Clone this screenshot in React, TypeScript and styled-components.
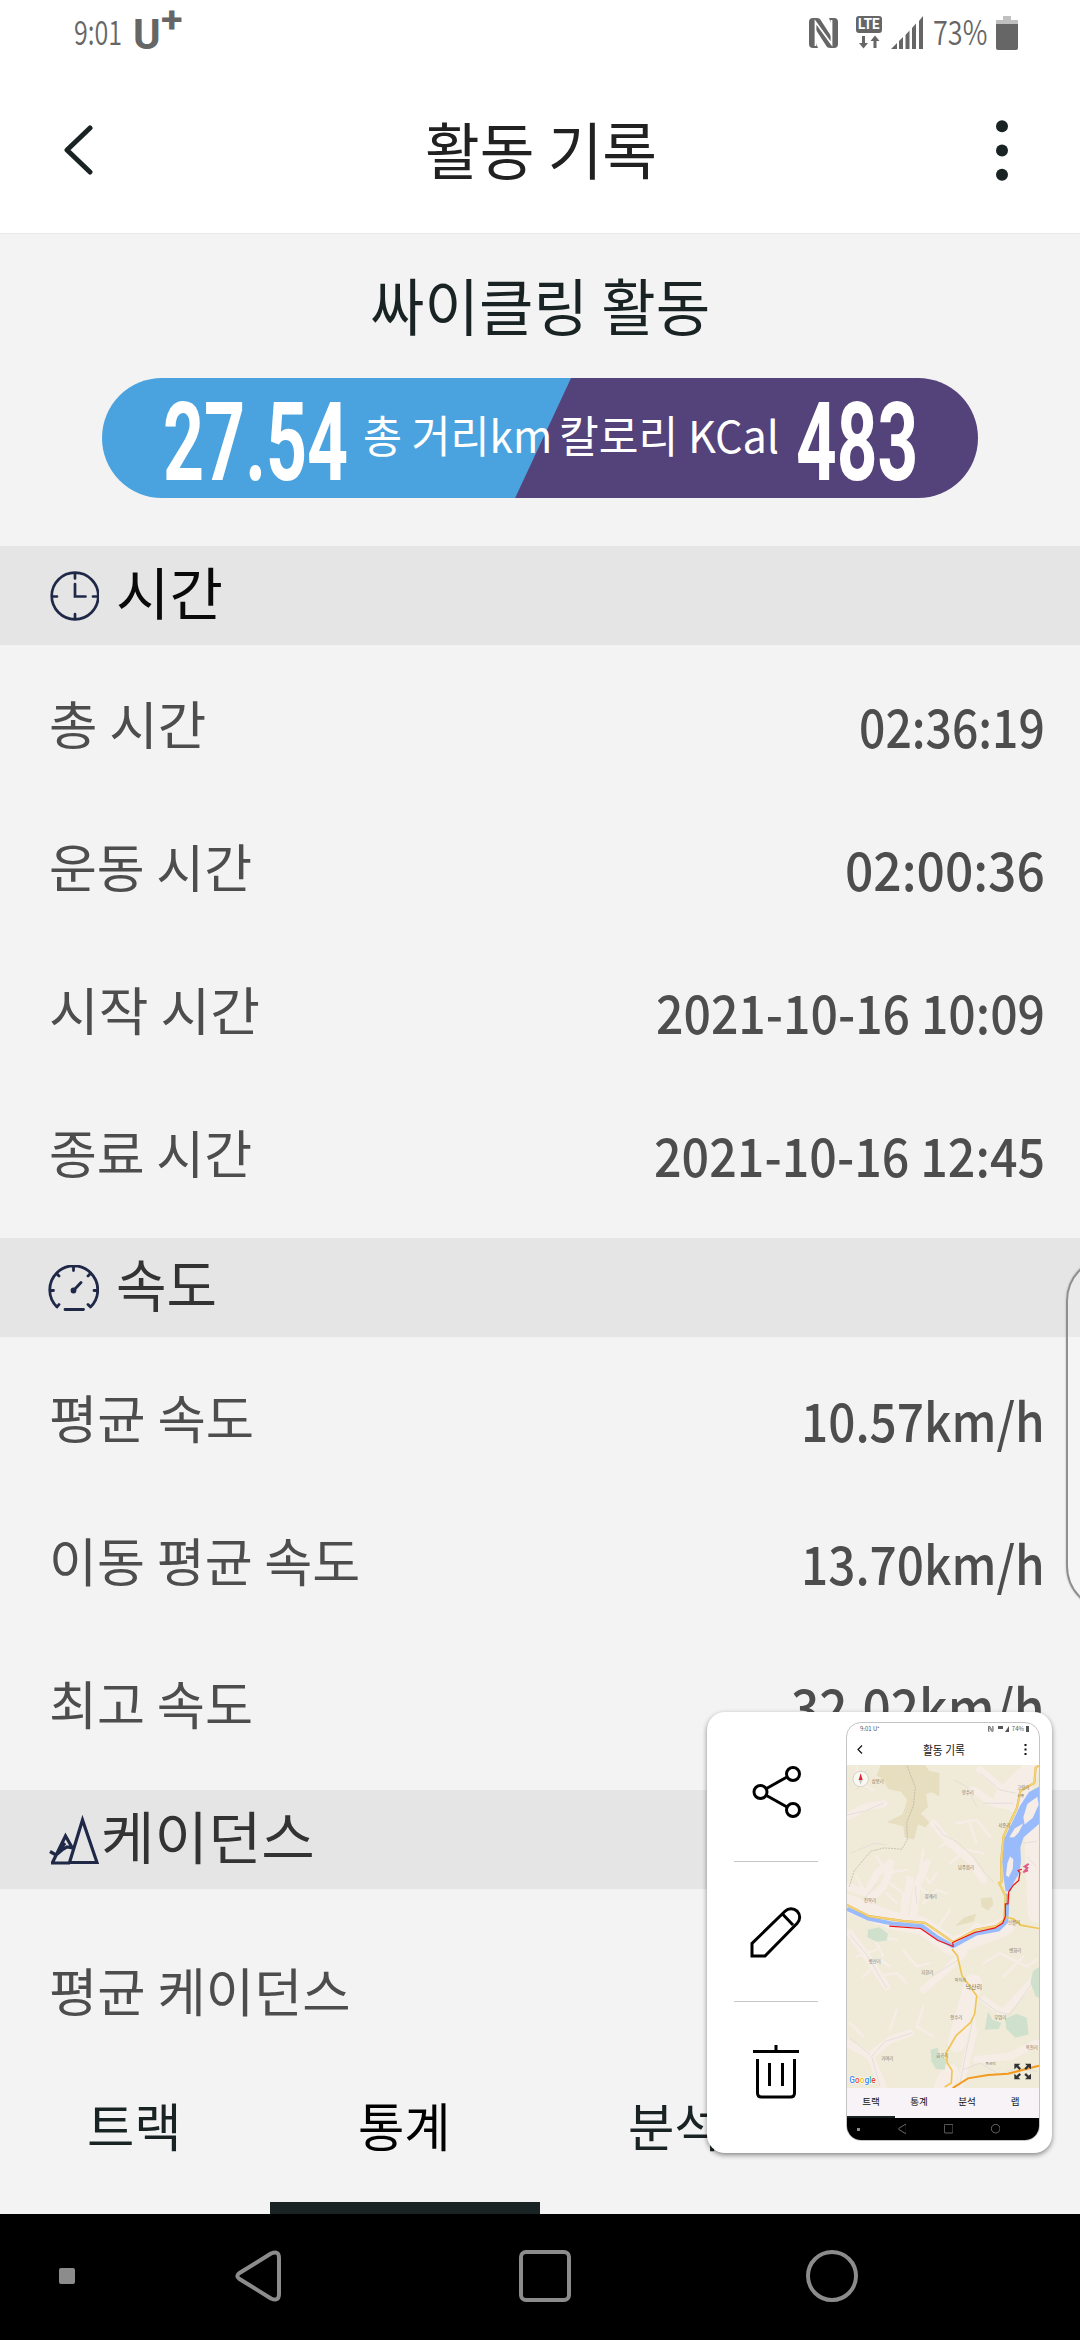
import React, { useLayoutEffect, useRef, useState } from "react";
import styled, { createGlobalStyle } from "styled-components";

const GlobalStyle = createGlobalStyle`
  * { box-sizing: border-box; }
  body { margin: 0; background: #f3f3f3; }
`;

const ink = "#1a2324";
const navy = "#1f2847";

/* ---------- text that is condensed or widened to a given width ---------- */

const FitBox = styled.span<{ $w: number }>`
  display: block;
  flex: none;
  width: ${(p) => p.$w}px;
`;

const FitInner = styled.span`
  display: inline-block;
  white-space: pre;
  transform-origin: left center;
`;

function Fit({ w, children }: { w: number; children: React.ReactNode }) {
  const ref = useRef<HTMLSpanElement>(null);
  const [scale, setScale] = useState(1);
  useLayoutEffect(() => {
    if (ref.current && ref.current.offsetWidth) setScale(w / ref.current.offsetWidth);
  }, [w]);
  return (
    <FitBox $w={w}>
      <FitInner ref={ref} style={{ transform: `scaleX(${scale})` }}>
        {children}
      </FitInner>
    </FitBox>
  );
}

/* ---------- screen ---------- */

const Screen = styled.div`
  position: relative;
  display: flex;
  flex-direction: column;
  width: 1080px;
  height: 2340px;
  overflow: hidden;
  background: #f3f3f3;
  font-family: "Noto Sans CJK KR", "Noto Sans", sans-serif;
  line-height: 1;
`;

const StatusBar = styled.div`
  display: flex;
  justify-content: space-between;
  height: 67px;
  padding: 0 62px 0 74px;
  background: #fff;
  color: #666;
`;

const StatusGroup = styled.div<{ $gap: number }>`
  display: flex;
  align-items: center;
  gap: ${(p) => p.$gap}px;
  height: 65px;
`;

const StatusText = styled.div`
  font-size: 34px;
  font-weight: 350;
  padding-bottom: 4px;
`;

const Carrier = styled.div`
  display: flex;
  font-family: Roboto, sans-serif;
  font-weight: 700;
  font-size: 42px;
  padding-top: 4px;
`;

const CarrierPlus = styled.div`
  font-size: 36px;
  line-height: 24px;
  margin-top: -6px;
`;

const Header = styled.header`
  display: flex;
  align-items: center;
  justify-content: space-between;
  height: 167px;
  padding: 0 72px 0 64px;
  background: #fff;
  border-bottom: 1px solid #e9e9e9;
`;

const Title = styled.h1`
  margin: 0;
  padding: 0 8px 5px 0;
  font-size: 62px;
  font-weight: 400;
  color: #212121;
`;

const Content = styled.main`
  flex: 1;
  min-height: 0;
  overflow: hidden;
`;

const Summary = styled.section`
  display: flex;
  flex-direction: column;
  align-items: center;
  height: 312px;
`;

const ActivityName = styled.h2`
  display: flex;
  align-items: center;
  height: 140px;
  margin: 0;
  font-size: 62px;
  font-weight: 400;
  color: ${ink};
`;

const Pill = styled.div`
  display: flex;
  align-items: center;
  width: 876px;
  height: 120px;
  margin-top: 4px;
  padding-left: 61px;
  border-radius: 60px;
  background: linear-gradient(115deg, #4aa3df calc(50% + 2.3px), #54427a calc(50% + 3.3px));
  color: #fff;
`;

const BigNumber = styled.div`
  font-family: Roboto, sans-serif;
  font-weight: 700;
  font-size: 110px;
  padding-top: 10px;
`;

const PillLabel = styled.div<{ $ml: number; $mr: number }>`
  margin: 0 ${(p) => p.$mr}px 0 ${(p) => p.$ml}px;
  padding-bottom: 8px;
  font-size: 44px;
`;

const Section = styled.section<{ $top: number; $bottom: number }>`
  padding-bottom: ${(p) => p.$bottom}px;
  & > h3 { margin-bottom: ${(p) => p.$top}px; }
`;

const SectionHead = styled.h3<{ $color: string }>`
  display: flex;
  align-items: center;
  height: 99px;
  margin: 0;
  padding-left: 48px;
  background: #e5e5e5;
  color: ${(p) => p.$color};
  font-size: 57px;
  font-weight: 400;
`;

const SectionTitle = styled.span<{ $ml: number }>`
  margin-left: ${(p) => p.$ml}px;
  padding-bottom: 11px;
`;

const Row = styled.div`
  display: flex;
  align-items: center;
  justify-content: space-between;
  height: 143px;
  padding: 0 35px 0 49px;
  color: #4d4d4d;
`;

const Label = styled.div`
  padding-bottom: 4px;
  font-size: 52px;
`;

const Value = styled.div`
  padding-top: 2px;
  font-size: 53px;
  font-weight: 500;
`;

/* ---------- tabs and system navigation ---------- */

const Tabs = styled.nav`
  display: grid;
  grid-template-columns: repeat(4, 1fr);
  height: 162px;
`;

const Tab = styled.div<{ $active?: boolean }>`
  display: flex;
  align-items: center;
  justify-content: center;
  padding: 0 2px 5px 0;
  font-size: 52px;
  color: ${(p) => (p.$active ? "#000" : ink)};
  border-bottom: 12px solid ${(p) => (p.$active ? ink : "transparent")};
`;

const NavBar = styled.div`
  display: grid;
  grid-template-columns: 176px 284px 287px 1fr;
  align-items: center;
  height: 126px;
  padding: 0 0 2px 59px;
  background: #000;
`;

/* ---------- overlays ---------- */

const EdgeHandle = styled.div`
  position: absolute;
  left: 1066px;
  top: 1256px;
  width: 90px;
  height: 355px;
  border: 2px solid #8f8f8f;
  border-radius: 48px;
  background: rgba(255, 255, 255, 0.2);
  box-shadow: 0 0 2px rgba(0, 0, 0, 0.25);
`;

const CaptureCard = styled.aside`
  position: absolute;
  left: 707px;
  top: 1712px;
  display: flex;
  width: 345px;
  height: 441px;
  padding: 10px 11px 12px 27px;
  border-radius: 18px;
  background: #fff;
  box-shadow: 0 2px 5px rgba(0, 0, 0, 0.45);
`;

const Actions = styled.div`
  width: 84px;
  margin-right: 28px;
`;

const Action = styled.div`
  display: flex;
  align-items: center;
  justify-content: center;
  height: 140px;
  border-bottom: 1px solid #c6c6c6;
  &:last-child { border-bottom: 0; }
`;

const Thumb = styled.div`
  display: flex;
  flex-direction: column;
  width: 194px;
  height: 419px;
  overflow: hidden;
  border: 1px solid #c4c4c4;
  border-radius: 15px;
  background: #fff;
`;

const MiniStatus = styled.div`
  display: flex;
  justify-content: space-between;
  align-items: center;
  height: 12px;
  padding: 0 10px 0 13px;
  font-size: 6px;
  color: #555;
`;

const MiniIcons = styled.div`
  display: flex;
  align-items: center;
  gap: 2px;
`;

const MiniHeader = styled.div`
  display: flex;
  align-items: center;
  justify-content: space-between;
  height: 30px;
  padding: 0 12px 1px 10px;
  font-size: 12px;
  color: #111;
`;

const MiniTabs = styled.div`
  display: grid;
  grid-template-columns: repeat(4, 1fr);
  height: 30px;
  background: #f7f3f7;
`;

const MiniTab = styled.div<{ $active?: boolean }>`
  display: flex;
  align-items: center;
  justify-content: center;
  font-size: 9.5px;
  color: #111;
  border-bottom: 2px solid ${(p) => (p.$active ? ink : "transparent")};
`;

const MiniNav = styled.div`
  display: flex;
  align-items: center;
  justify-content: space-between;
  flex: 1;
  padding: 0 39px 0 10px;
  background: #000;
`;

/* ---------- icons ---------- */

const NfcIcon = ({ s = 1 }: { s?: number }) => (
  <svg width={29 * s} height={30 * s} viewBox="0 0 29 30">
    <path fill="#666" d="M4 0h3q3 0 4 1l11 17V5l-2-5h5q4 0 4 4v22q0 4-4 4h-3q-3 0-4-1L7 12v13l2 5H4q-4 0-4-4V4q0-4 4-4z" />
    <path fill="none" stroke="#fff" strokeWidth="1.800" d="M6.500 28V4l16 22V2" />
  </svg>
);

const LteBadge = styled.div`
  width: 26px;
  height: 17px;
  border-radius: 3px;
  background: #666;
  color: #fff;
  font: 700 14px/17px Roboto, sans-serif;
  text-align: center;
  padding-left: 2px;
`;

const LteIcon = () => (
  <div>
    <LteBadge><Fit w={22}>LTE</Fit></LteBadge>
    <svg width="26" height="16" viewBox="0 0 26 16" display="block">
      <path fill="#666" d="M6 3h3v7h3l-4.500 5.500L3 10h3zM17.500 15h3V8h3l-4.500-5.500L14.500 8h3z" />
    </svg>
  </div>
);

const SignalIcon = () => (
  <svg width="33" height="33" viewBox="0 0 33 33">
    <path fill="#666" d="M0 33l6-6v6zM8 25l4-4v12H8zM14.500 19l4-4.500V33h-4zM21 12l4-4.500V33h-4zM28 5l4-5v33h-4z" />
  </svg>
);

const BatteryIcon = () => (
  <svg width="22" height="34" viewBox="0 0 22 34">
    <path fill="#c0c0c0" d="M7 0h8v4h7v5H0V4h7z" />
    <path fill="#666" d="M0 8h22v24q0 2-2 2H2q-2 0-2-2z" />
  </svg>
);

const BackIcon = () => (
  <svg width="29" height="50" viewBox="0 0 29 50">
    <path d="M26 3L3 25l23 22" fill="none" stroke={ink} strokeWidth="5" strokeLinecap="round" strokeLinejoin="round" />
  </svg>
);

const MoreIcon = () => (
  <svg width="12" height="61" viewBox="0 0 12 61">
    {[6.2, 30.500, 54.800].map((y) => <circle key={y} cx="6" cy={y} r="6" fill={ink} />)}
  </svg>
);

const ClockIcon = () => (
  <svg width="51" height="50" viewBox="0 0 51 50" fill="none" stroke={navy} strokeWidth="2.700" strokeLinecap="round">
    <circle cx="27" cy="25" r="23.300" />
    <path d="M27 13v12.500h10.500M27 3v4.500M27 43v4.500M5 25.500h4M45 25.500h4" />
  </svg>
);

const GaugeIcon = () => (
  <svg width="51" height="46" viewBox="0 0 51 46" fill="none" stroke={navy} strokeWidth="2.800" strokeLinecap="round">
    <path d="M9 42a24 24 0 1 1 33.500 0M17 44.500h18.500M25.500 2v3.500M2 25.500h3.500M46 25.500h3.500M9 9l2 2M42 9l-2 2M9 42l2-2.500M42.500 42l-2.500-2.500M26 25l7-7.500" />
    <circle cx="25.500" cy="25.500" r="2.300" fill={navy} stroke="none" />
    <circle cx="25.500" cy="25.500" r="1.500" />
  </svg>
);

const MountainIcon = () => (
  <svg width="51" height="51" viewBox="0 0 51 51" fill="none" stroke={navy} strokeWidth="3.200">
    <path d="M21.500 48.500L34.500 6L49 48.500zM4.500 48.500L17.500 22l8 14M3 49h19M2 37.500l6 3.500 6-5 5-3 6 1M8 41l9-12" />
  </svg>
);

const nav = { fill: "none", stroke: "#8c8c8c", strokeWidth: 4 } as const;

const NavDot = () => (
  <svg width="16" height="16" viewBox="0 0 16 16"><rect width="16" height="16" rx="2" fill="#8c8c8c" /></svg>
);
const NavBack = ({ s = 1 }: { s?: number }) => (
  <svg width={46 * s} height={52 * s} viewBox="0 0 46 52">
    <path {...nav} strokeLinejoin="round" d="M36 3.500Q44 0 44 8v36q0 8-8 4.500L4.500 29Q0 26 4.500 23z" />
  </svg>
);
const NavHome = ({ s = 1 }: { s?: number }) => (
  <svg width={52 * s} height={52 * s} viewBox="0 0 52 52"><rect x="2" y="2" width="48" height="48" rx="5" {...nav} /></svg>
);
const NavRecent = ({ s = 1 }: { s?: number }) => (
  <svg width={52 * s} height={52 * s} viewBox="0 0 52 52"><circle cx="26" cy="26" r="24" {...nav} /></svg>
);

const line = { fill: "none", stroke: "#000", strokeWidth: 3 } as const;

const ShareIcon = () => (
  <svg width="52" height="54" viewBox="0 0 52 54" {...line}>
    <circle cx="10.500" cy="27" r="6.500" /><circle cx="43" cy="9" r="6.500" /><circle cx="43" cy="45" r="6.500" />
    <path d="M16.500 23.500L37 12M16.500 30.500L37 42" />
  </svg>
);
const PencilIcon = () => (
  <svg width="54" height="54" viewBox="0 0 54 54" {...line}>
    <path d="M3 51V38.500L36 6.200a8.500 8.500 0 0 1 12.200 12L16 51zM33.500 9L44 20" />
  </svg>
);
const TrashIcon = () => (
  <svg width="48" height="54" viewBox="0 0 48 54" {...line}>
    <path d="M24 0v6M1 6.500h46M5.500 14v34q0 4 4 4h29q4 0 4-4V14M17.500 18v23M30.500 18v23" />
  </svg>
);

/* ---------- map ---------- */

const places: [number, number, string, number][] = [
  [563, 278, "삼봉리", 13], [833, 313, "양수리", 13], [1000, 296, "고랑리", 13], [992, 320, "시흥", 11],
  [943, 410, "서종리", 13], [828, 537, "남주읍리", 13], [540, 637, "진목리", 13], [722, 624, "청계리", 13],
  [972, 703, "신월리", 13], [554, 821, "병산리", 13], [712, 853, "지한리", 13], [976, 787, "병화리", 13],
  [811, 876, "마지리", 12], [851, 897, "낙산리", 18], [799, 987, "항수리", 13], [931, 989, "부암리", 13],
  [757, 1101, "금곡리", 13], [592, 1110, "가여리", 13], [902, 1125, "독산리", 11], [1025, 1078, "옥천리", 13],
];

const MapView = () => (
  <svg width="192" height="323" viewBox="471 225 576 970" preserveAspectRatio="none" fill="none" display="block">
    <rect x="471" y="225" width="576" height="970" fill="#f0ebd8" />
    <g stroke="#f6ede7" strokeLinejoin="round" strokeLinecap="round">
      <path strokeWidth="22" d="M471 380l60-30 50-8M471 590l60 20 30-60 40-30M520 650l60-60 20-50M670 680l10-90 30-70M640 690l20-120M730 400l50 60 60 50 40 60M850 300l60 40 60 10M870 240l70 60 70 20M471 1060l70 40 40 95M540 1100l60-50 60-20M700 900l70-60 50-50M880 930l60 40 100-110M830 900l20 130-40 160M860 1110l100-10 80-40M480 730l50 70 60 90M800 780l60-70 60 20" />
      <path strokeWidth="54" d="M471 640l130 50 100 20 85 60 160-60M1020 235l-40 110 60 40M1030 420l10 250M850 880l-50 180M780 1150l-20 40M940 320l60-60" />
      <path strokeWidth="7" d="M500 230l10 50 40 20M560 500l30 50 60-10M700 480l-10 60 30 40 20-30M600 580l40 30-5 60M750 470l40-20M780 520l50-40 50 10M560 860l60-10 30 30M700 950l-20 60 50 30M580 800l-30-60 70 10M950 800l60 30 30-20M940 860l60-60M650 560l60 50M900 440l-40-50-60 10M520 600l-20-40M620 640l-30-30M700 640l40-40 30 10M500 800l60-20M520 860l50-50 30 20M640 780l40 50 40-10M880 820l50-30 40 20M740 720l40-60M860 460l-20-60M480 1000l40 40M620 960l-20 60" />
    </g>
    <path fill="#e7ddbf" d="M572 225h132l14 18 30 6v70l-22-12-18 4 6 40-22 20 26 26-12 16-22-10-12 46-28-6-4-34-50-12 48-24 14-44-20-24-38-8-14-30-20-10zM872 626l34-4 4 22-16 18-20-12zM796 708l28-26 34-10-6 22-44 12z" />
    <path fill="#cfe0cd" d="M534 720l34-8 26 20-4 20-30 4-28-14zM1047 832l-18 12-8 34 16 42 10 4zM894 966l14 24 26 10-8 18-42 2zM946 986l34-14 30 12 6 50-40 10-28-28zM722 1080l22-6 2 20 24 16-6 30-26-2-14-24z" />
    <g stroke="#e0dcd8" strokeWidth="2.500">
      <path d="M735 405l25 30 40 20 45 40 45 60 20 20M471 375l55-12 55-24M500 300l30-60M482 490l70-30 40 5M520 630l40-50M680 640l-4-50M805 810l-80 50M860 920l60 45 40 10 80-115M848 990l-20 100-20 100M820 1140l50-20 60 35 50-20 60 10M545 1100l40-45 80-25M545 1100l25 90M480 1045l60 50M480 735l50 60 60 100M860 350l-30-60-40-20M880 340h90M870 250l60 50 50 10M1000 460l40-6M1010 500l30 30" />
    </g>
    <path stroke="#aaa799" strokeWidth="1.800" strokeDasharray="6 3" d="M478 590l14-46 50-60 40-10 54 4 16-30-2-50 20-50 6-56-26-67" />
    <path fill="#99bbfc" d="M1047 290l-30 16-26 40-24 50-24 50-6 70 4 50 6 38h16l8-26 18-30 4-36-2-40 10-30 46-40z" />
    <path fill="#f6ede7" d="M1042 320l-30 22-12 40 4 22 24-20 18-40zM1000 400l-26 16-16 26 14 0 14-14zM960 500l-8 20-4 36 8 6 12-24 2-30z" />
    <path stroke="#99bbfc" strokeWidth="12" strokeLinejoin="round" d="M471 657l66 30 70 14 90 8 46 34 46 26 70-38 66-12 24-24 4-84" />
    <path stroke="#ddb545" strokeWidth="6.500" strokeLinejoin="round" d="M471 645l66 34 100 14 68 6 50 34 34 24 70-38 60-10 24-20 4-70-20-40 8-2-2-60 8-80 40-84 10-50 42-24 4-46 12-8" />
    <path stroke="#f8d477" strokeWidth="4.500" strokeLinejoin="round" d="M471 645l66 34 100 14 68 6 50 34 34 24 70-38 60-10 24-20 4-70-20-40 8-2-2-60 8-80 40-84 10-50 42-24 4-46 12-8" />
    <path stroke="#efc653" strokeWidth="5" strokeLinejoin="round" d="M786 778l16 20 14 60 44 60-6 54-12 26-44 40-30 52 4 30 14 22-2 38-20 12M948 682l24 6 20 18 55 10" />
    <path stroke="#f39a1e" strokeWidth="6" d="M788 1195l46-29 60-10 60-4 93-24" />
    <path stroke="#ef1111" strokeWidth="3.500" strokeLinejoin="round" d="M598 709l94 7 52 36 46 18-2-12 66-30 62-14 22-14 8-20v-38h8l2-36 14-20 16-14 4-24-6-6 12-4" />
    <path stroke="#e05a8a" strokeWidth="6" d="M1000 548l12-14-8-4 12-8M1004 545l10-4" />
    <g fontFamily="'Noto Sans CJK KR', sans-serif" fill="#7d6f5a" textAnchor="middle">
      {places.map(([x, y, t, s]) => <text key={t} x={x} y={y} fontSize={s}>{t}</text>)}
    </g>
    <circle cx="512" cy="267" r="23" fill="#faf8f2" stroke="#c8c2b8" strokeWidth="2" />
    <path fill="#e0262b" d="M512 250l6 20h-12z" />
    <path fill="#c7c7c7" d="M512 284l-5-14h10z" />
    <text x="478" y="1179" fontFamily="Roboto, sans-serif" fontSize="25" fontWeight="500" stroke="#fff" strokeWidth="3" paintOrder="stroke">
      <tspan fill="#4285f4">G</tspan><tspan fill="#ea4335">o</tspan><tspan fill="#fbbc05">o</tspan><tspan fill="#4285f4">g</tspan><tspan fill="#34a853">l</tspan><tspan fill="#ea4335">e</tspan>
    </text>
    <path fill="#333" d="M973 1122h18l-6 6 8 8-5 5-8-8-7 6zM1023 1122h-18l6 6-8 8 5 5 8-8 7 6zM973 1169h18l-6-6 8-8-5-5-8 8-7-6zM1023 1169h-18l6-6-8-8 5-5 8 8 7-6z" />
  </svg>
);

/* ---------- data ---------- */

type Item = { label: string; lw: number; value?: string; vw?: number };

const timeRows: Item[] = [
  { label: "총 시간", lw: 157, value: "02:36:19", vw: 186 },
  { label: "운동 시간", lw: 203, value: "02:00:36", vw: 200 },
  { label: "시작 시간", lw: 211, value: "2021-10-16 10:09", vw: 389 },
  { label: "종료 시간", lw: 203, value: "2021-10-16 12:45", vw: 391 },
];

const speedRows: Item[] = [
  { label: "평균 속도", lw: 205, value: "10.57km/h", vw: 244 },
  { label: "이동 평균 속도", lw: 311, value: "13.70km/h", vw: 244 },
  { label: "최고 속도", lw: 204, value: "32.02km/h", vw: 254 },
];

const cadenceRows: Item[] = [{ label: "평균 케이던스", lw: 302 }];

const Rows = ({ items }: { items: Item[] }) => (
  <>
    {items.map((r) => (
      <Row key={r.label}>
        <Label><Fit w={r.lw}>{r.label}</Fit></Label>
        {r.value && <Value><Fit w={r.vw!}>{r.value}</Fit></Value>}
      </Row>
    ))}
  </>
);

export default function App() {
  return (
    <>
      <GlobalStyle />
      <Screen>
        <StatusBar>
          <StatusGroup $gap={11}>
            <StatusText><Fit w={48}>9:01</Fit></StatusText>
            <Carrier>
              <Fit w={28}>U</Fit>
              <CarrierPlus><Fit w={22}>+</Fit></CarrierPlus>
            </Carrier>
          </StatusGroup>
          <StatusGroup $gap={9}>
            <StatusGroup $gap={18}><NfcIcon /><LteIcon /></StatusGroup>
            <SignalIcon />
            <StatusText><Fit w={54}>73%</Fit></StatusText>
            <BatteryIcon />
          </StatusGroup>
        </StatusBar>

        <Header>
          <BackIcon />
          <Title><Fit w={232}>활동 기록</Fit></Title>
          <MoreIcon />
        </Header>

        <Content>
          <Summary>
            <ActivityName><Fit w={340}>싸이클링 활동</Fit></ActivityName>
            <Pill>
              <BigNumber><Fit w={185}>27.54</Fit></BigNumber>
              <PillLabel $ml={15} $mr={7}><Fit w={189}>총 거리km</Fit></PillLabel>
              <PillLabel $ml={0} $mr={17}><Fit w={220}>칼로리 KCal</Fit></PillLabel>
              <BigNumber><Fit w={122}>483</Fit></BigNumber>
            </Pill>
          </Summary>

          <Section $top={8} $bottom={13}>
            <SectionHead $color="#0a0a0a"><ClockIcon /><SectionTitle $ml={17}><Fit w={107}>시간</Fit></SectionTitle></SectionHead>
            <Rows items={timeRows} />
          </Section>

          <Section $top={10} $bottom={14}>
            <SectionHead $color="#333"><GaugeIcon /><SectionTitle $ml={17}><Fit w={101}>속도</Fit></SectionTitle></SectionHead>
            <Rows items={speedRows} />
          </Section>

          <Section $top={31} $bottom={0}>
            <SectionHead $color="#333"><MountainIcon /><SectionTitle $ml={2}><Fit w={214}>케이던스</Fit></SectionTitle></SectionHead>
            <Rows items={cadenceRows} />
          </Section>
        </Content>

        <Tabs>
          <Tab><Fit w={95}>트랙</Fit></Tab>
          <Tab $active><Fit w={93}>통계</Fit></Tab>
          <Tab><Fit w={93}>분석</Fit></Tab>
          <Tab><Fit w={46}>랩</Fit></Tab>
        </Tabs>

        <NavBar><NavDot /><NavBack /><NavHome /><NavRecent /></NavBar>

        <EdgeHandle />

        <CaptureCard>
          <Actions>
            <Action><ShareIcon /></Action>
            <Action><PencilIcon /></Action>
            <Action><TrashIcon /></Action>
          </Actions>
          <Thumb>
            <MiniStatus>
              <span>9:01 U⁺</span>
              <MiniIcons>
                <NfcIcon s={0.19} />
                <svg width="14" height="6" viewBox="0 0 14 6"><path fill="#555" d="M2 0h5v3H2zM9 6l4-6v6z" /></svg>
                <span>74%</span>
                <svg width="3" height="6"><rect width="3" height="6" fill="#555" /></svg>
              </MiniIcons>
            </MiniStatus>
            <MiniHeader>
              <svg width="6" height="9" viewBox="0 0 6 9"><path d="M5 .5L1 4.500l4 4" fill="none" stroke="#111" strokeWidth="1.200" /></svg>
              <Fit w={42}>활동 기록</Fit>
              <svg width="3" height="11" viewBox="0 0 3 11"><path d="M.5 0h2v2h-2zM.5 4.500h2v2h-2zM.5 9h2v2h-2z" fill="#111" /></svg>
            </MiniHeader>
            <MapView />
            <MiniTabs>
              <MiniTab $active>트랙</MiniTab><MiniTab>통계</MiniTab><MiniTab>분석</MiniTab><MiniTab>랩</MiniTab>
            </MiniTabs>
            <MiniNav>
              <svg width="3" height="3"><rect width="3" height="3" fill="#8c8c8c" /></svg>
              <NavBack s={0.19} /><NavHome s={0.18} /><NavRecent s={0.18} />
            </MiniNav>
          </Thumb>
        </CaptureCard>
      </Screen>
    </>
  );
}
